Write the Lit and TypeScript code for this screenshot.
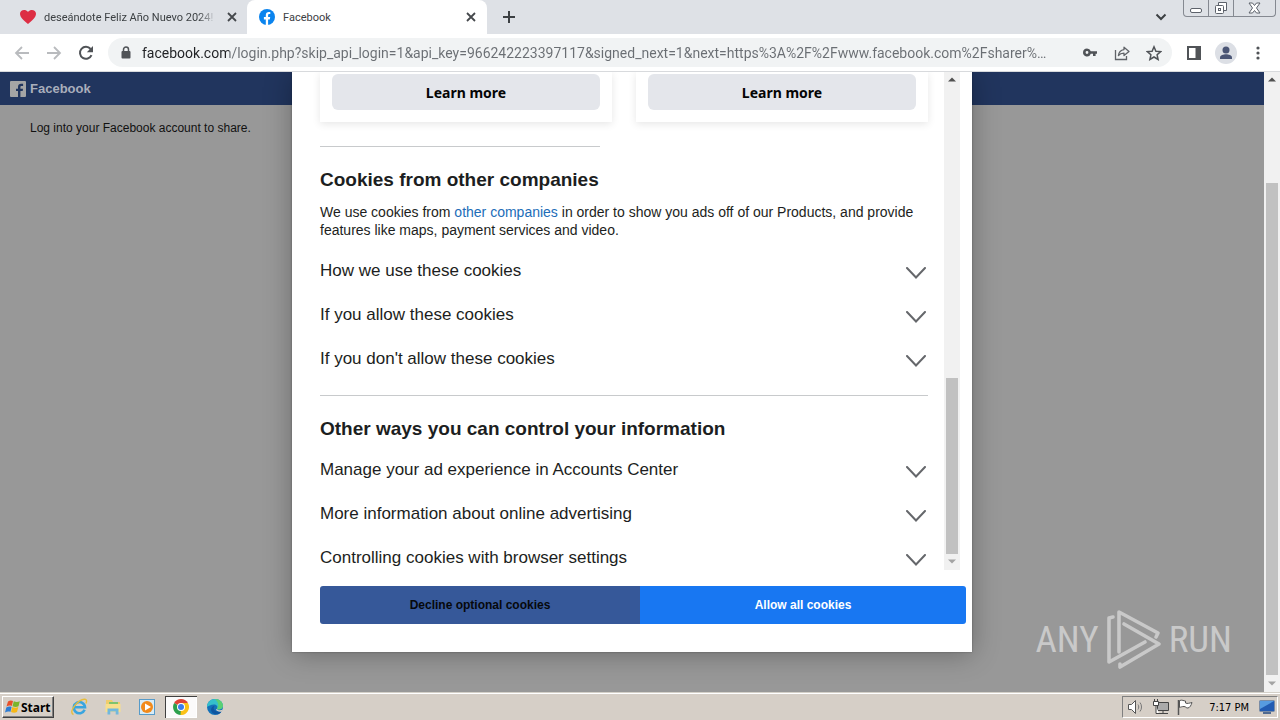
import { LitElement, html, svg, css } from "lit";
import { customElement, property } from "lit/decorators.js";

const heart = svg`<path d="M8 15C4 11.500 0 8.500 0 4.800 0 1.200 5 -.6 8 3c3-3.600 8-1.800 8 1.800C16 8.500 12 11.500 8 15Z" fill="#dd2e44"/>`;
const arrowShape = svg`<path d="M15 8H2M8 2 2 8l6 6" fill="none" stroke="#b9bbbe" stroke-width="1.8"/>`;

@customElement("scroll-track")
class ScrollTrack extends LitElement {
  @property({ type: Number }) before = 0;
  @property({ type: Number }) thumb = 1;
  @property({ type: Number }) after = 0;
  static styles = css`
    :host { display: flex; flex-direction: column; width: 16px; flex: none; background: #f1f1f1; }
    svg { display: block; width: 16px; height: 16px; flex: none; }
    .thumb { margin: 0 2px; background: #c1c1c1; }
  `;
  render() {
    return html`
      <svg viewBox="0 0 16 16"><path d="M4 9.500 8 5.500l4 4Z" fill="#505050" /></svg>
      <div style="flex:${this.before} 0 0"></div>
      <div class="thumb" style="flex:${this.thumb} 0 0"></div>
      <div style="flex:${this.after} 0 0"></div>
      <svg viewBox="0 0 16 16"><path d="M4 5.500 8 9.500l4-4Z" fill="#a3a3a3" /></svg>
    `;
  }
}

@customElement("browser-chrome")
class BrowserChrome extends LitElement {
  static styles = css`
    :host { display: block; flex: none; font-family: Roboto, "Noto Sans", sans-serif; color: #3c4043; }
    button { border: 0; padding: 0; background: none; font: inherit; color: inherit; display: grid; place-items: center; flex: none; }
    svg { display: block; flex: none; }
    .tabs { display: flex; height: 34px; background: #dee1e6; }
    .tab { display: flex; align-items: center; width: 240px; height: 34px; box-sizing: border-box; padding: 0 8px 0 12px; gap: 8px; font-size: 11px; }
    .tab.first { width: 247px; padding: 0 7px 0 20px; }
    .tab.active { background: #fff; border-radius: 8px 8px 0 0; }
    .title { flex: 1; min-width: 0; overflow: hidden; white-space: nowrap; }
    .fade { mask-image: linear-gradient(90deg, #000 90%, transparent); }
    .close { width: 16px; height: 16px; }
    .new { width: 28px; height: 34px; margin-left: 8px; }
    .space { flex: 1; }
    .search { width: 28px; height: 34px; margin-right: 8px; }
    .win { display: flex; height: 17px; border: 1px solid #858991; border-top: 0; border-radius: 0 0 4px 4px; margin-right: 4px; box-sizing: border-box; }
    .win button { width: 25px; height: 16px; border-right: 1px solid #858991; }
    .win button:last-child { width: 41px; border: 0; }
    .bar { display: flex; align-items: center; height: 37px; background: #fff; border-bottom: 1px solid #d8dadd; padding: 0 6px 0 8px; }
    .nav { width: 28px; height: 28px; margin-right: 4px; }
    .omni { display: flex; align-items: center; flex: 1; min-width: 0; height: 29px; border-radius: 15px; background: #f1f3f4; padding: 0 2px 0 12px; margin-left: 4px; margin-right: 6px; }
    input { flex: 1; min-width: 0; border: 0; outline: 0; padding: 0; margin: 0 4px 0 10px; height: 29px; font: 14px Roboto, "Noto Sans", sans-serif; color: transparent; background: linear-gradient(90deg, #202124 87px, #6a6e73 87px); -webkit-background-clip: text; background-clip: text; }
    .act { width: 32px; height: 28px; }
  `;
  render() {
    const x = html`<svg width="10" height="10" viewBox="0 0 10 10"><path d="m1 1 8 8M9 1 1 9" stroke="#45484c" stroke-width="1.800" /></svg>`;
    return html`
      <div class="tabs">
        <div class="tab first">
          <svg width="16" height="16" viewBox="0 0 16 16">${heart}</svg>
          <span class="title fade">deseándote Feliz Año Nuevo 2024! 2</span>
          <button class="close" aria-label="Close tab">${x}</button>
        </div>
        <div class="tab active">
          <svg width="16" height="16" viewBox="0 0 16 16"><circle cx="8" cy="8" r="8" fill="#0b84ee" /><path d="M6.800 16v-5.600H4.900V8h1.900V6.300c0-2.100 1.200-3.200 3-3.200.8 0 1.500.1 1.500.1v1.900h-.9c-1 0-1.300.6-1.300 1.200V8h2.100l-.4 2.400H9.100V16Z" fill="#fff" /></svg>
          <span class="title">Facebook</span>
          <button class="close" aria-label="Close tab">${x}</button>
        </div>
        <button class="new" aria-label="New tab"><svg width="12" height="12" viewBox="0 0 12 12"><path d="M6 0v12M0 6h12" stroke="#3c4043" stroke-width="2" /></svg></button>
        <div class="space"></div>
        <button class="search" aria-label="Search tabs"><svg width="12" height="12" viewBox="0 0 12 12"><path d="m1.500 3.500 4.500 4.500 4.500-4.500" fill="none" stroke="#3c4043" stroke-width="2" /></svg></button>
        <div class="win">
          <button aria-label="Minimize"><svg width="14" height="14" viewBox="0 0 14 14"><rect x="1.500" y="7.500" width="11" height="4" rx="1.500" fill="#fff" stroke="#5d626b" /></svg></button>
          <button aria-label="Restore"><svg width="14" height="14" viewBox="0 0 14 14"><path d="M4.500 4V1.500h8v8H10" fill="#fff" stroke="#5d626b" /><rect x="1.500" y="4.500" width="8" height="8" rx="1" fill="#fff" stroke="#5d626b" /><rect x="4.500" y="7.500" width="2" height="2" fill="none" stroke="#5d626b" /></svg></button>
          <button aria-label="Close"><svg width="13" height="12" viewBox="0 0 13 12"><path d="M1 1h3.500l2 2.500L8.500 1H12L8.500 6l3.500 5H8.500l-2-2.500-2 2.500H1l3.500-5Z" fill="#fff" stroke="#5d626b" /></svg></button>
        </div>
      </div>
      <div class="bar">
        <button class="nav" aria-label="Back"><svg width="16" height="16" viewBox="0 0 16 16">${arrowShape}</svg></button>
        <button class="nav" aria-label="Forward"><svg width="16" height="16" viewBox="0 0 16 16"><g transform="matrix(-1 0 0 1 16 0)">${arrowShape}</g></svg></button>
        <button class="nav" aria-label="Reload"><svg width="16" height="16" viewBox="0 0 16 16"><path d="M13.500 10.200A6 6 0 1 1 12.600 4" fill="none" stroke="#505357" stroke-width="2" /><path d="M15 1v6.200H8.800Z" fill="#505357" /></svg></button>
        <div class="omni">
          <svg width="12" height="14" viewBox="0 0 12 14"><rect x="1.500" y="5" width="9" height="7.500" rx="1" fill="#505357" /><path d="M3.500 6V3.500a2.500 2.500 0 0 1 5 0V6" fill="none" stroke="#505357" stroke-width="1.500" /></svg>
          <input aria-label="Address" value="facebook.com/login.php?skip_api_login=1&amp;api_key=966242223397117&amp;signed_next=1&amp;next=https%3A%2F%2Fwww.facebook.com%2Fsharer%…" />
          <button class="act" aria-label="Passwords"><svg width="16" height="12" viewBox="0 0 16 12"><path d="M5 1.500a4 4 0 1 0 3.800 5.300H11V9h2.600V6.800H15V4.200H8.800A4 4 0 0 0 5 1.500Zm0 2.600a1.400 1.400 0 1 1 0 2.800 1.400 1.400 0 0 1 0-2.800Z" fill="#505357" /></svg></button>
          <button class="act" aria-label="Share"><svg width="16" height="16" viewBox="0 0 16 16"><path d="M1.500 5v9.500h11V11" fill="none" stroke="#606368" stroke-width="1.300" /><path d="M10 2.200 15 6.400l-5 4.200V8.200c-2.600 0-4.300.7-5.600 2.400.4-3.300 2.300-5.500 5.600-6Z" fill="none" stroke="#606368" stroke-width="1.300" stroke-linejoin="round" /></svg></button>
          <button class="act" aria-label="Bookmark"><svg width="16" height="16" viewBox="0 0 16 16"><path d="m8 1.800 1.900 4.400 4.800.4-3.600 3.200 1 4.700L8 12l-4.100 2.500 1-4.700-3.600-3.200 4.800-.4Z" fill="none" stroke="#505357" stroke-width="1.500" /></svg></button>
        </div>
        <button class="act" aria-label="Side panel"><svg width="14" height="14" viewBox="0 0 14 14"><rect x="1" y="1" width="12" height="12" fill="#fff" stroke="#505357" stroke-width="2" /><path d="M8.500 1H13v12H8.500Z" fill="#505357" /></svg></button>
        <button class="act" aria-label="Profile"><svg width="22" height="22" viewBox="0 0 22 22"><circle cx="11" cy="11" r="11" fill="#dcdfe5" /><circle cx="11" cy="8" r="3.500" fill="#4a5575" /><path d="M5 17v-1.500c0-2 3.500-3.200 6-3.200s6 1.200 6 3.200V17Z" fill="#4a5575" /></svg></button>
        <button class="act" aria-label="Menu"><svg width="4" height="14" viewBox="0 0 4 14"><g fill="#505357"><circle cx="2" cy="2" r="1.600" /><circle cx="2" cy="7" r="1.600" /><circle cx="2" cy="12" r="1.600" /></g></svg></button>
      </div>
    `;
  }
}

@customElement("cookie-dialog")
class CookieDialog extends LitElement {
  static styles = css`
    :host { display: flex; flex-direction: column; width: 680px; box-sizing: border-box; padding: 0 0 28px 28px; background: #fff; box-shadow: 0 2px 26px rgba(0, 0, 0, 0.3), 0 0 2px rgba(0, 0, 0, 0.3); font-family: "Liberation Sans", Arial, sans-serif; color: #1c1e21; }
    .scroller { display: flex; flex: 1; min-height: 0; margin-right: 12px; }
    .content { flex: 1; min-width: 0; overflow: hidden; padding: 0 16px 0 8px; margin-left: -8px; }
    .cards { display: grid; grid-template-columns: 1fr 1fr; gap: 24px; }
    .card { padding: 2px 12px 12px; box-shadow: 0 2px 8px rgba(0, 0, 0, 0.1); }
    .card button { display: block; width: 100%; height: 36px; border: 0; border-radius: 6px; background: #e4e6eb; color: #050505; font: bold 14px "Noto Sans", sans-serif; }
    hr { height: 1px; border: 0; background: #c8cacc; margin: 14px 0 21px; }
    hr.short { width: 280px; margin-top: 24px; }
    h2 { margin: 0; font-size: 19px; line-height: 24px; }
    p { margin: 11px 0 10px; font-size: 14px; line-height: 18px; }
    a { color: #216db8; text-decoration: none; }
    .row { display: flex; width: 100%; height: 44px; align-items: center; justify-content: space-between; border: 0; padding: 0 2px 0 0; background: none; font: 17px "Liberation Sans", Arial, sans-serif; color: #1c1e21; }
    .row svg { display: block; margin-top: 3px; }
    .last { margin-top: 7px; }
    .actions { display: flex; height: 38px; margin: 16px 6px 0 0; border-radius: 3px; overflow: hidden; }
    .actions button { flex: 1; border: 0; padding: 0; font: bold 12px "Liberation Sans", Arial, sans-serif; color: #fff; background: #1877f2; }
    .actions .decline { flex: none; width: 320px; background: #365899; color: #06080c; }
  `;
  row(label: string) {
    return html`<button class="row"><span>${label}</span><svg width="20" height="12" viewBox="0 0 20 12"><path d="m1 1 9 9.500L19 1" fill="none" stroke="#65676b" stroke-width="2" stroke-linecap="round" /></svg></button>`;
  }
  render() {
    return html`
      <div class="scroller">
        <div class="content">
          <div class="cards">
            <div class="card"><button>Learn more</button></div>
            <div class="card"><button>Learn more</button></div>
          </div>
          <hr class="short" />
          <h2>Cookies from other companies</h2>
          <p>We use cookies from <a href="#">other companies</a> in order to show you ads off of our Products, and provide features like maps, payment services and video.</p>
          ${["How we use these cookies", "If you allow these cookies", "If you don't allow these cookies"].map((t) => this.row(t))}
          <hr />
          <h2>Other ways you can control your information</h2>
          <div class="last">
            ${["Manage your ad experience in Accounts Center", "More information about online advertising", "Controlling cookies with browser settings"].map((t) => this.row(t))}
          </div>
        </div>
        <scroll-track .before=${290} .thumb=${176} .after=${0}></scroll-track>
      </div>
      <div class="actions"><button class="decline">Decline optional cookies</button><button>Allow all cookies</button></div>
    `;
  }
}

@customElement("task-bar")
class TaskBar extends LitElement {
  static styles = css`
    :host { display: flex; flex: none; align-items: center; height: 28px; box-sizing: border-box; padding: 1px 2px 0; border-top: 1px solid #d4d0c8; background: #d6cfc7; box-shadow: inset 0 1px #fff; font-family: "DejaVu Sans Condensed", Roboto, sans-serif; color: #000; }
    svg { display: block; flex: none; }
    button { display: grid; place-items: center; padding: 0; border: 0; background: none; }
    .start { display: flex; width: 52px; height: 22px; border: 1px solid; border-color: #fff #404040 #404040 #fff; box-shadow: inset -1px -1px #808080; font: bold 12px "Noto Sans", sans-serif; padding: 0 2px; margin-right: 9px; }
    .app { width: 32px; height: 22px; margin-right: 2px; }
    .pressed { background: #fbfafa; box-shadow: inset 1px 1px #404040, inset -1px -1px #fff; }
    .space { flex: 1; }
    .tray { display: flex; align-items: center; height: 22px; box-sizing: border-box; border: 1px solid; border-color: #808080 #fff #fff #808080; padding: 0 2px 0 4px; gap: 8px; font-size: 11px; }
    time { margin: 0 2px 0 8px; white-space: nowrap; }
  `;
  render() {
    return html`
      <button class="start"><svg width="16" height="16" viewBox="0 0 16 16"><path d="M3 2.500C5 1 7 1.500 8 2L6.800 7C5.500 6.400 3.500 6.300 1.500 7.600Z" fill="#e8502a" /><path d="M8.800 2.300c2 1 4 1 6 0L13.500 7.200c-2 1.100-4 1-6 0Z" fill="#7ab52c" /><path d="M1.300 8.400c2-1.200 4-1.200 5.300-.5l-1.200 5C4 12.200 2 12.300 0 13.400Z" fill="#2c7cd4" /><path d="M7.300 8.100c2 1 4 1 6 0L12 13c-2 1.100-4 1-6 0Z" fill="#f6b816" /></svg>Start</button>
      <button class="app" aria-label="Internet Explorer"><svg width="18" height="18" viewBox="0 0 18 18"><path d="M14.600 11.800A5.600 5.600 0 1 1 15 9.300H5" fill="none" stroke="#39a5df" stroke-width="2.600" /><path d="M3.500 16.500C-2.500 14 9 .5 15 1.300c2.200.3 1.700 2.600.9 4.200" fill="none" stroke="#e7bd3b" stroke-width="1.400" /></svg></button>
      <button class="app" aria-label="Explorer"><svg width="18" height="18" viewBox="0 0 18 18"><path d="M2 2h6l1 2h7v10H2Z" fill="#f0cd6c" /><path d="M5 4h9v3H5Z" fill="#7fc36d" /><path d="M1.500 6h15v8h-15Z" fill="#f8df8c" /><path d="M3.500 16.500V10.500h11v6h-2.800v-3H6.300v3Z" fill="#72b8dc" /></svg></button>
      <button class="app" aria-label="Media Player"><svg width="16" height="16" viewBox="0 0 16 16"><rect x=".5" y=".5" width="15" height="15" fill="#d8ecf7" stroke="#579bc9" /><circle cx="8" cy="8" r="6" fill="#f28a1b" /><path d="m6 4.500 6 3.500-6 3.500Z" fill="#fff" /></svg></button>
      <button class="app pressed" aria-label="Chrome"><svg width="16" height="16" viewBox="0 0 16 16"><path d="M8 8 1.100 4A8 8 0 0 1 14.900 4Z" fill="#df4335" /><path d="M8 8 1.100 4A8 8 0 0 0 8 16l3.500-6Z" fill="#2da04c" /><path d="M8 8 7.500 16A8 8 0 0 0 14.900 4H8Z" fill="#fbc116" /><circle cx="8" cy="8" r="4" fill="#fff" /><circle cx="8" cy="8" r="3" fill="#3b7ded" /></svg></button>
      <button class="app" aria-label="Edge"><svg width="16" height="16" viewBox="0 0 16 16"><circle cx="8" cy="8" r="8" fill="#1370b8" /><path d="M0 8C0 3.500 3.500 0 8 0s8 3.300 8 6.800c0 3-3.600 4.400-6.200 3.200 1.500-2 .2-4.500-2.800-4.500S1 7 0 8Z" fill="#34bfcb" /><path d="M8 0c4.500 0 8 3.300 8 6.800 0 3-3.600 4.400-6.200 3.200C12 7 12 4 8 0Z" fill="#5bcf74" /><path d="M7.500 7C5.500 9 7 13.500 14.500 12.500 12 17 4.500 16 4 11c0-2 1.500-4 3.500-4Z" fill="#0f55a0" /><path d="M9.800 10c1.500 1.800 4.500 1.500 6.200.2l-1 2.200c-3 .8-5.500-.4-6-2Z" fill="#d6cfc7" /></svg></button>
      <div class="space"></div>
      <div class="tray">
        <svg width="18" height="16" viewBox="0 0 18 16"><path d="M1.500 5.500h3l4-4v13l-4-4h-3Z" fill="#fff" stroke="#555" /><path d="M11 5.500c1 1.500 1 3.500 0 5M13 3.500c2 2.500 2 6.500 0 9" fill="none" stroke="#777" /></svg>
        <svg width="16" height="16" viewBox="0 0 16 16"><path d="M4.500 3.500h11v8h-11Z" fill="#aaa" stroke="#444" /><path d="M6 14.500h9M10 11.500v3" stroke="#444" /><path d="M.5 2.500h5v4h-5ZM1.500 0v2.500M4.500 0v2.500M3 6.500v8h3" fill="#fff" stroke="#444" /></svg>
        <svg width="16" height="16" viewBox="0 0 16 16"><path d="M1.500 1v15" stroke="#555" stroke-width="1.500" /><path d="M2.500 1.500c3-1 4 .5 6 .5v2c2 1 4 0 6.500-.5-1 3-2 5-4 5.500-2 .3-2-1.500-4-1.500-2 0-3 .5-4.500 1Z" fill="#fff" stroke="#555" /></svg>
        <time>7:17 PM</time>
        <svg width="16" height="14" viewBox="0 0 16 14"><rect x=".5" y=".5" width="15" height="11" rx="1" fill="#225bb2" stroke="#7a8ca5" /><path d="M1 1h14L1 9Z" fill="#579be0" /><path d="M4 13h8" stroke="#23487f" stroke-width="1.500" /></svg>
      </div>
    `;
  }
}

@customElement("app-root")
class AppRoot extends LitElement {
  static styles = css`
    :host { display: flex; flex-direction: column; height: 100vh; overflow: hidden; font-family: "Liberation Sans", Arial, sans-serif; }
    .view { display: flex; flex: 1; min-height: 0; }
    .page { position: relative; flex: 1; min-width: 0; overflow: hidden; background: #989898; }
    header { display: flex; align-items: center; gap: 4px; height: 33px; padding-left: 10px; background: #21355e; color: #a9aebb; font-size: 13px; font-weight: bold; }
    header svg { display: block; }
    .login { margin: 14px 30px; font-size: 12px; line-height: 18px; color: #111; }
    .overlay { position: absolute; inset: 0; display: flex; justify-content: center; padding-bottom: 40px; }
    .mark { position: absolute; right: 32px; bottom: 18px; display: flex; align-items: center; gap: 7px; color: #c9c9c9; font: 37px "Roboto Condensed", "Liberation Sans Narrow", sans-serif; line-height: 68px; }
    .mark svg { display: block; }
  `;
  render() {
    return html`
      <browser-chrome></browser-chrome>
      <div class="view">
        <main class="page">
          <header><svg width="16" height="16" viewBox="0 0 16 16"><rect width="16" height="16" rx="1" fill="#a5a5a5" /><path d="M8 16V10H6V7.700h2V6c0-2 1.200-3.200 3.100-3.200h2V5h-1.400c-1 0-1.300.5-1.300 1.200v1.500H13l-.3 2.300h-2.300v6Z" fill="#21355e" /></svg>Facebook</header>
          <p class="login">Log into your Facebook account to share.</p>
          <div class="overlay"><cookie-dialog role="dialog" aria-label="Cookies"></cookie-dialog></div>
          <div class="mark">
            <span>ANY</span>
            <svg width="56" height="62" viewBox="0 0 56 62"><g fill="none" stroke="#c9c9c9" stroke-width="3.600" stroke-linejoin="round" stroke-linecap="round"><path d="M7 8 3 9v44l36-20" /><path d="M13 43V3l39 21-2 4" /><path d="m18 15 35 20-39 23v-3" /></g></svg>
            <span>RUN</span>
          </div>
        </main>
        <scroll-track .before=${95} .thumb=${492} .after=${1}></scroll-track>
      </div>
      <task-bar></task-bar>
    `;
  }
}
